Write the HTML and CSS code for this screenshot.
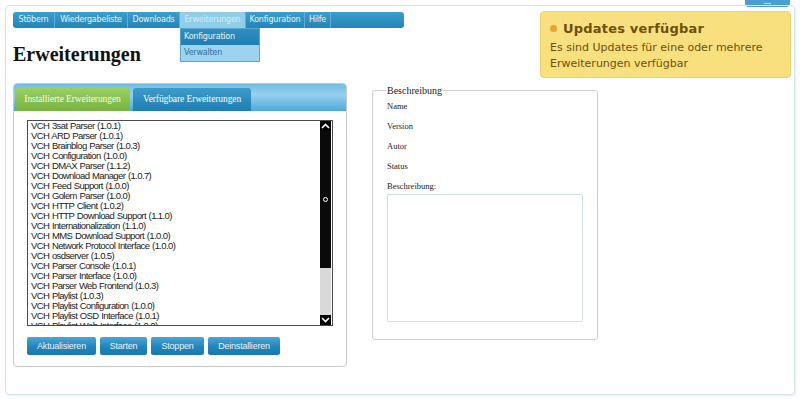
FILE: index.html
```html
<!DOCTYPE html>
<html lang="de">

<head>
    <meta charset="UTF-8">
    <meta name="viewport" content="width=device-width, initial-scale=1.0">
    <title>Erweiterungen</title>
    <link rel="stylesheet" href="styles.css">
</head>

<body>
    <div class="toggle"><span></span></div>
    <div class="page">
        <ul class="menu">
            <li class="item-1">Stöbern</li>
            <li class="item-2">Wiedergabeliste</li>
            <li class="item-3">Downloads</li>
            <li class="item-4 active">Erweiterungen
                <ul class="submenu">
                    <li>Konfiguration</li>
                    <li class="current">Verwalten</li>
                </ul>
            </li>
            <li class="item-5">Konfiguration</li>
            <li class="item-6">Hilfe</li>
        </ul>

        <div class="notice">
            <h3><span class="dot"></span>Updates verfügbar</h3>
            <p>Es sind Updates für eine oder mehrere Erweiterungen verfügbar</p>
        </div>

        <h1>Erweiterungen</h1>

        <div class="content">
            <div class="tabs">
                <div class="tab-bar">
                    <div class="tab tab-green">Installierte Erweiterungen</div>
                    <div class="tab tab-blue">Verfügbare Erweiterungen</div>
                </div>
                <div class="tab-body">
                    <div class="listbox">
                        <ul class="ext-list">
                            <li>VCH 3sat Parser (1.0.1)</li>
                            <li>VCH ARD Parser (1.0.1)</li>
                            <li>VCH Brainblog Parser (1.0.3)</li>
                            <li>VCH Configuration (1.0.0)</li>
                            <li>VCH DMAX Parser (1.1.2)</li>
                            <li>VCH Download Manager (1.0.7)</li>
                            <li>VCH Feed Support (1.0.0)</li>
                            <li>VCH Golem Parser (1.0.0)</li>
                            <li>VCH HTTP Client (1.0.2)</li>
                            <li>VCH HTTP Download Support (1.1.0)</li>
                            <li>VCH Internationalization (1.1.0)</li>
                            <li>VCH MMS Download Support (1.0.0)</li>
                            <li>VCH Network Protocol Interface (1.0.0)</li>
                            <li>VCH osdserver (1.0.5)</li>
                            <li>VCH Parser Console (1.0.1)</li>
                            <li>VCH Parser Interface (1.0.0)</li>
                            <li>VCH Parser Web Frontend (1.0.3)</li>
                            <li>VCH Playlist (1.0.3)</li>
                            <li>VCH Playlist Configuration (1.0.0)</li>
                            <li>VCH Playlist OSD Interface (1.0.1)</li>
                            <li>VCH Playlist Web Interface (1.0.0)</li>
                        </ul>
                        <div class="scrollbar">
                            <div class="arrow"><svg width="9" height="6" viewBox="0 0 9 6"><path d="M1 5 L4.5 1.5 L8 5" fill="none" stroke="#fff" stroke-width="1.6"/></svg></div>
                            <div class="thumb"><span></span></div>
                            <div class="track"></div>
                            <div class="arrow"><svg width="9" height="6" viewBox="0 0 9 6"><path d="M1 1 L4.5 4.5 L8 1" fill="none" stroke="#fff" stroke-width="1.6"/></svg></div>
                        </div>
                    </div>
                    <div class="buttons">
                        <button class="btn btn-update">Aktualisieren</button>
                        <button class="btn btn-start">Starten</button>
                        <button class="btn btn-stop">Stoppen</button>
                        <button class="btn btn-remove">Deinstallieren</button>
                    </div>
                </div>
            </div>

            <fieldset class="details">
                <legend>Beschreibung</legend>
                <div class="field">Name</div>
                <div class="field">Version</div>
                <div class="field">Autor</div>
                <div class="field">Status</div>
                <div class="field">Beschreibung:</div>
                <textarea class="desc"></textarea>
            </fieldset>
        </div>
    </div>
</body>

</html>
```

FILE: styles.css
```css
body {
    margin: 0;
    padding: 0;
    font-family: 'Liberation Sans', Arial, sans-serif;
    background: #fff;
    position: relative;
    width: 800px;
    height: 399px;
    overflow: hidden;
}

.toggle {
    position: absolute;
    top: 0;
    left: 745px;
    width: 45px;
    height: 7px;
    background: #4a9fd0;
    border-radius: 0 0 4px 4px;
    display: flex;
    justify-content: center;
    align-items: center;
}

.toggle span {
    display: block;
    width: 7px;
    height: 1px;
    background: #bfe0f2;
}

.page {
    margin: 5px 0 0 5px;
    width: 774px;
    height: 376px;
    padding: 6px 7px;
    border: 1px solid #d3e6ee;
    border-radius: 4px;
    box-shadow: 1px 1px 2px rgba(0, 0, 0, 0.08);
    position: relative;
}

/* main navigation */
.menu {
    list-style: none;
    margin: 0;
    padding: 0;
    width: 391px;
    height: 16px;
    display: flex;
    background: linear-gradient(#3d9dcc, #2384b9);
    border-radius: 3px;
    font-family: 'DejaVu Sans', Verdana, sans-serif;
    font-size: 8px;
    letter-spacing: -0.2px;
    color: #e6f3fa;
}

.menu > li {
    position: relative;
    line-height: 16px;
    border-right: 1px solid #5cb0da;
    text-align: center;
    box-sizing: border-box;
}

.item-1 { width: 42px; }
.item-2 { width: 73px; }
.item-3 { width: 52px; }
.item-4 { width: 66px; }
.item-5 { width: 59px; }
.item-6 { width: 26px; }

.menu > li.active {
    background: #8fcde9;
    color: #d8eef8;
}

.submenu {
    list-style: none;
    margin: 0;
    padding: 0;
    position: absolute;
    top: 16px;
    left: 0;
    width: 80px;
    border: 1px solid #5ba6cf;
    box-sizing: border-box;
    text-align: left;
    z-index: 2;
}

.submenu li {
    height: 16px;
    line-height: 16px;
    padding-left: 3px;
    background: linear-gradient(#2f8fc2, #1f7db1);
    color: #e6f3fa;
}

.submenu li.current {
    background: #9cd3ee;
    color: #2c6f96;
}

/* update notice */
.notice {
    position: absolute;
    top: 5px;
    right: 3px;
    width: 251px;
    height: 67px;
    box-sizing: border-box;
    background: #f8e07e;
    border: 1px solid #efd26c;
    border-radius: 4px;
    padding: 8px 9px 7px 9px;
    font-family: 'DejaVu Sans', Verdana, sans-serif;
    color: #6d5008;
}

.notice h3 {
    margin: 0;
    font-size: 13px;
    letter-spacing: 0.2px;
    line-height: 17px;
    display: flex;
    align-items: center;
}

.dot {
    width: 7px;
    height: 7px;
    border-radius: 50%;
    background: #e8a52b;
    margin-right: 6px;
}

.notice p {
    margin: 3px 0 0;
    font-size: 11px;
    line-height: 16px;
}

h1 {
    margin: 14px 0 0;
    font-family: 'Liberation Serif', 'Times New Roman', serif;
    font-size: 20px;
    line-height: 24px;
    color: #111;
}

.content {
    display: flex;
    align-items: flex-start;
    margin-top: 17px;
}

/* tabs panel */
.tabs {
    width: 334px;
    height: 284px;
    box-sizing: border-box;
    border: 1px solid #c9c9c9;
    border-radius: 4px;
    overflow: hidden;
}

.tab-bar {
    height: 27px;
    background: linear-gradient(#6fbde4, #97d0ee 40%, #4ea9d9);
    display: flex;
    align-items: flex-end;
    padding-left: 1px;
    gap: 3px;
    box-sizing: border-box;
}

.tab {
    height: 23px;
    line-height: 23px;
    font-family: 'Liberation Serif', 'Times New Roman', serif;
    font-size: 9.5px;
    letter-spacing: -0.1px;
    color: #fff;
    text-align: center;
    border-radius: 3px 3px 0 0;
}

.tab-green {
    width: 115px;
    background: linear-gradient(#9acf63, #77b441);
    color: #f4fbe9;
}

.tab-blue {
    width: 118px;
    background: linear-gradient(#3d9bcb, #1e7db3);
}

.tab-body {
    padding: 9px 0 0 13px;
}

.listbox {
    width: 306px;
    height: 206px;
    box-sizing: border-box;
    border: 1px solid #4a4a4a;
    display: flex;
    overflow: hidden;
}

.ext-list {
    list-style: none;
    margin: 0;
    padding: 0 0 0 3px;
    flex: 1;
    font-size: 9.5px;
    line-height: 10px;
    letter-spacing: -0.6px;
    word-spacing: 0.6px;
    color: #1a1a1a;
}

.scrollbar {
    width: 11px;
    display: flex;
    flex-direction: column;
    margin-right: 1px;
}

.arrow {
    height: 10px;
    background: #000;
    display: flex;
    align-items: center;
    justify-content: center;
}

.thumb {
    height: 137px;
    background: #0a0a0a;
    display: flex;
    align-items: center;
    justify-content: center;
}

.thumb span {
    width: 3px;
    height: 3px;
    border: 1px solid #fff;
    border-radius: 50%;
}

.track {
    flex: 1;
    background: #d9d9d9;
}

.buttons {
    display: flex;
    gap: 4px;
    margin-top: 11px;
}

.btn {
    height: 18px;
    padding: 0;
    border: none;
    border-radius: 2px;
    background: linear-gradient(#4aa6d6, #2185bb 55%, #1a79ad);
    color: #eaf5fb;
    font-family: 'Liberation Sans', Arial, sans-serif;
    font-size: 9px;
    letter-spacing: -0.2px;
    cursor: pointer;
}

.btn-update { width: 69px; }
.btn-start { width: 47px; }
.btn-stop { width: 53px; }
.btn-remove { width: 72px; }

/* description fieldset */
.details {
    margin: 2px 0 0 25px;
    width: 226px;
    height: 255px;
    box-sizing: border-box;
    border: 1px solid #cfcfcf;
    border-radius: 3px;
    padding: 0 0 0 14px;
    font-family: 'Liberation Serif', 'Times New Roman', serif;
    color: #222;
}

.details legend {
    font-size: 10px;
    padding: 0 1px;
    margin-left: -1px;
}

.field {
    font-size: 8.5px;
    height: 20px;
    line-height: 12px;
    padding-top: 2px;
    box-sizing: border-box;
}

.field:first-of-type {
    margin-top: 2px;
}

.desc {
    display: block;
    width: 196px;
    height: 128px;
    box-sizing: border-box;
    margin-top: -4px;
    border: 1px solid #cde2e8;
    border-radius: 2px;
    resize: none;
}
```
